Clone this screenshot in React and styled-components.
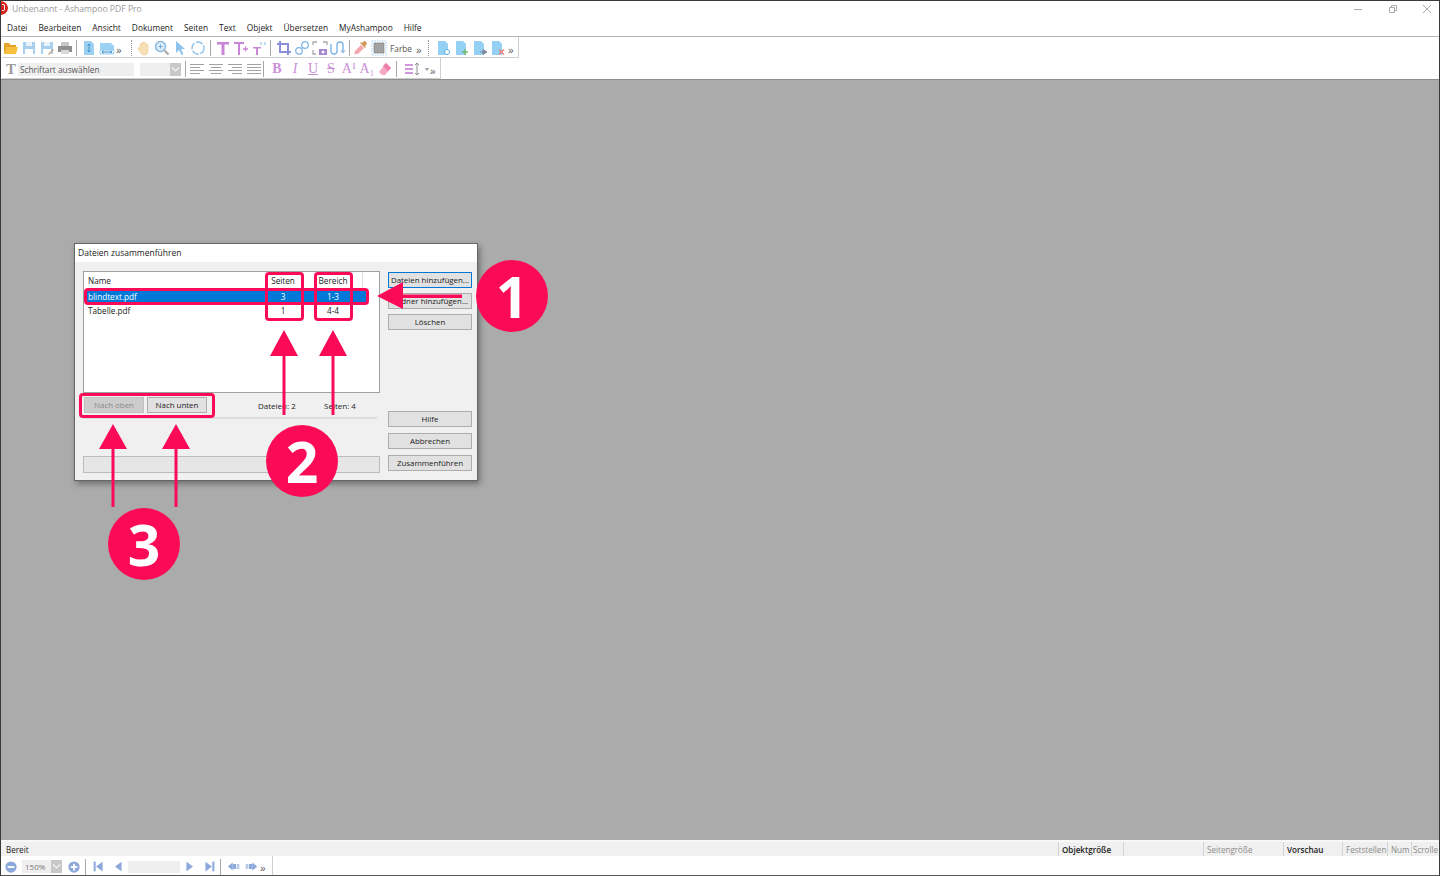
import React from "react";
import styled, { createGlobalStyle } from "styled-components";

const pink = "#fb0a58";

const Global = createGlobalStyle`
  html, body { margin: 0; padding: 0; height: 100%; overflow: hidden; }
  body { font-family: "Open Sans", "Liberation Sans", sans-serif; font-size: 9px; color: #1c1c1c; }
`;

const Win = styled.div`
  position: relative;
  width: 1440px;
  height: 876px;
  box-sizing: border-box;
  border: 1px solid #3a3a3a;
  border-bottom-color: #555;
  display: flex;
  flex-direction: column;
  background: #fff;
  overflow: hidden;
`;

/* ----- title + menu ----- */
const TitleBar = styled.div`
  height: 17px;
  flex: none;
  display: flex;
  align-items: center;
  padding: 0 0 1px 11px;
  box-sizing: border-box;
  color: #9a9a9a;
  font-size: 8.6px;
  position: relative;
`;

const AppLogo = styled.span`
  position: absolute;
  left: -9px;
  top: 0;
  width: 16px;
  height: 14px;
  border-radius: 50%;
  background: #d3201c;
  &::after {
    content: "";
    position: absolute;
    right: 3px;
    top: 3px;
    width: 2px;
    height: 5px;
    border: 1px solid #fff;
    border-left: none;
    border-radius: 0 2px 2px 0;
  }
`;

const WinControls = styled.div`
  margin-left: auto;
  display: flex;
  align-items: center;
`;

const WinBtn = styled.span`
  width: 34.5px;
  height: 16px;
  box-sizing: border-box;
  padding-right: 7px;
  display: flex;
  align-items: center;
  justify-content: flex-end;
`;

const MenuBar = styled.nav`
  height: 19px;
  flex: none;
  display: flex;
  align-items: center;
  padding-left: 6px;
  gap: 11px;
  font-size: 8.35px;
  color: #222;
  border-bottom: 1px solid #b5b5b5;
  box-sizing: border-box;
`;

/* ----- toolbars ----- */
const ToolRow = styled.div`
  height: ${(p) => p.$h || 21}px;
  flex: none;
  display: flex;
  align-items: center;
  background: #fff;
  padding-left: 1px;
  box-sizing: border-box;
`;

const ToolGroup = styled.div`
  display: flex;
  align-items: center;
  height: 100%;
  width: ${(p) => p.$w}px;
  flex: none;
  box-sizing: border-box;
  padding-top: 2px;
  border-right: 1px solid #cfcfcf;
  border-bottom: ${(p) => (p.$flat ? "none" : "1px solid #cfcfcf")};
`;

const Slot = styled.span`
  width: ${(p) => p.$w || 18}px;
  height: 18px;
  flex: none;
  display: flex;
  align-items: center;
  justify-content: center;
  color: ${(p) => p.$c || "#cb8fd8"};
  font-family: "Liberation Serif", serif;
  font-size: ${(p) => p.$size || 13}px;
  font-weight: ${(p) => (p.$bold ? 700 : 400)};
  font-style: ${(p) => (p.$italic ? "italic" : "normal")};
  text-decoration: ${(p) => p.$deco || "none"};
`;

const Sep = styled.span`
  width: 1px;
  height: 16px;
  flex: none;
  background: #a8a8a8;
  margin: 0 ${(p) => p.$r ?? 4}px 0 ${(p) => p.$l ?? 4}px;
`;

const Grip = styled.span`
  width: 1px;
  height: 16px;
  flex: none;
  border-left: 1px dotted #9a9a9a;
  box-sizing: border-box;
  margin: 0 ${(p) => p.$r ?? 4}px 0 ${(p) => p.$l ?? 4}px;
`;

const More = styled.span`
  width: 8px;
  flex: none;
  align-self: flex-end;
  font-family: "Liberation Sans", sans-serif;
  font-size: 10px;
  line-height: 10px;
  color: #555;
  margin-bottom: 1px;
  margin-left: ${(p) => p.$ml || 0}px;
`;

const DropTick = styled.span`
  width: 7px;
  height: 3px;
  flex: none;
  display: flex;
  justify-content: center;
  align-self: center;
  &::before {
    content: "";
    border-left: 2.5px solid transparent;
    border-right: 2.5px solid transparent;
    border-top: 3px solid #999;
  }
`;

const ColorLabel = styled.span`
  width: 26px;
  margin-left: 2px;
  flex: none;
  color: #555;
  font-size: 8.3px;
`;

const FontSelect = styled.div`
  width: 116px;
  height: 13px;
  flex: none;
  margin-left: -2px;
  background: #efefef;
  color: #555;
  font-size: 8.3px;
  line-height: 13px;
  padding-left: 2px;
  box-sizing: border-box;
`;

const Combo = styled.div`
  width: ${(p) => p.$w}px;
  height: 13px;
  flex: none;
  display: flex;
  align-items: center;
  background: #efefef;
  color: #777;
  font-size: 8px;
  padding-left: ${(p) => (p.$text ? 3 : 0)}px;
  box-sizing: border-box;
  margin-left: ${(p) => p.$ml || 0}px;
`;

const ComboArrow = styled.span`
  margin-left: auto;
  width: 11px;
  height: 13px;
  background: #c8c8c8;
  display: flex;
  align-items: center;
  justify-content: center;
`;

const PageField = styled.div`
  width: 52px;
  height: 12px;
  flex: none;
  background: #efefef;
  margin: 0 1px;
`;

/* ----- workspace ----- */
const Workspace = styled.main`
  flex: 1;
  position: relative;
  background: #ababab;
  border-top: 1px solid #8e8e8e;
`;

/* ----- dialog ----- */
const Dialog = styled.section`
  position: absolute;
  left: 73px;
  top: 163px;
  width: 404px;
  height: 238px;
  box-sizing: border-box;
  border: 1px solid #666;
  background: #f0f0f0;
  box-shadow: 2px 3px 6px rgba(0, 0, 0, 0.35);
  display: flex;
  flex-direction: column;
`;

const DialogTitle = styled.div`
  height: 18px;
  flex: none;
  background: #fff;
  font-size: 8.5px;
  line-height: 18px;
  padding-left: 3px;
  color: #222;
`;

const DialogBody = styled.div`
  flex: 1;
  display: flex;
  padding: 9px 6px 7px 8px;
  gap: 8px;
`;

const LeftCol = styled.div`
  width: 297px;
  flex: none;
  display: flex;
  flex-direction: column;
`;

const FileList = styled.div`
  height: 122px;
  flex: none;
  box-sizing: border-box;
  background: #fff;
  border: 1px solid #a0a0a0;
  padding: 0 1px;
`;

const ListRow = styled.div`
  display: grid;
  grid-template-columns: 174px 48px 52px 1fr;
  align-items: center;
  box-sizing: border-box;
  padding-bottom: 1px;
  height: ${(p) => p.$h}px;
  width: ${(p) => p.$w || 282}px;
  font-size: 8.2px;
  background: ${(p) => (p.$active ? "#0078d7" : "transparent")};
  color: ${(p) => (p.$active ? "#fff" : "#222")};
`;

const HeaderRow = styled(ListRow)`
  width: 278px;
  border-right: 1px solid #dcdcdc;
`;

const NameCell = styled.span`
  padding-left: 3px;
`;

const NumCell = styled.span`
  text-align: center;
`;

const ActionRow = styled.div`
  height: 24px;
  flex: none;
  display: flex;
  align-items: center;
  padding-left: 1px;
  gap: 3px;
  font-size: 8px;
`;

const DlgButton = styled.button`
  width: ${(p) => p.$w || 84}px;
  height: 16px;
  flex: none;
  padding: 0 0 1px;
  box-sizing: border-box;
  font-family: inherit;
  font-size: 7.9px;
  color: ${(p) => (p.disabled ? "#8a8a8a" : "#222")};
  background: ${(p) => (p.disabled ? "#cccccc" : "#e1e1e1")};
  border: 1px solid ${(p) => (p.$focus ? "#0078d7" : p.disabled ? "#bfbfbf" : "#adadad")};
  white-space: nowrap;
`;

const Count = styled.span`
  flex: none;
  margin-left: ${(p) => p.$ml}px;
  width: ${(p) => p.$w}px;
`;

const Rule = styled.div`
  width: 294px;
  height: 2px;
  flex: none;
  background: #dcdcdc;
`;

const Progress = styled.div`
  height: 17px;
  width: 297px;
  flex: none;
  box-sizing: border-box;
  margin-top: auto;
  background: #e6e6e6;
  border: 1px solid #bcbcbc;
`;

const RightCol = styled.div`
  width: 84px;
  flex: none;
  display: flex;
  flex-direction: column;
`;

const BtnStack = styled.div`
  display: flex;
  flex-direction: column;
  gap: ${(p) => p.$gap}px;
  margin-top: ${(p) => p.$top || 0}px;
`;

/* ----- status ----- */
const StatusBar = styled.footer`
  height: 16px;
  flex: none;
  display: flex;
  align-items: center;
  background: #f0f0f0;
  font-size: 8.1px;
  color: #222;
  border-top: 2px solid #f8f8f8;
  box-sizing: border-box;
`;

const StatusText = styled.span`
  flex: 1;
  padding: 1px 0 0 5px;
`;

const StatusCell = styled.span`
  width: ${(p) => p.$w}px;
  flex: none;
  box-sizing: border-box;
  height: 100%;
  line-height: 15px;
  padding-left: ${(p) => p.$pad ?? 3}px;
  border-left: 1px solid #d4d4d4;
  white-space: nowrap;
  font-weight: ${(p) => (p.$strong ? 600 : 400)};
  color: ${(p) => (p.$dim ? "#8b8b8b" : "#222")};
`;

/* ----- annotations ----- */
const Mark = styled.div`
  position: absolute;
  left: ${(p) => p.$x}px;
  top: ${(p) => p.$y}px;
  width: ${(p) => p.$w}px;
  height: ${(p) => p.$h}px;
  box-sizing: border-box;
  border: 3px solid ${pink};
  border-radius: 4px;
`;

const Badge = styled.div`
  position: absolute;
  left: ${(p) => p.$x - 36}px;
  top: ${(p) => p.$y - 36}px;
  width: 72px;
  height: 72px;
  border-radius: 50%;
  background: ${pink};
  color: #fff;
  font-family: "Open Sans", sans-serif;
  font-weight: 700;
  font-size: 57px;
  line-height: 72px;
  text-align: center;
`;

const ArrowLayer = styled.svg`
  position: absolute;
  left: -1px;
  top: -1px;
  pointer-events: none;
`;

const Ico = ({ children, size = 16 }) => (
  <svg width={size} height={size} viewBox="0 0 16 16">
    {children}
  </svg>
);

const Folder = () => (
  <Ico>
    <path d="M1 3h5l1.500 2H13v2H4L2 13H1z" fill="#e5a32c" />
    <path d="M3.500 7H15l-2 7H1z" fill="#f6bf3e" />
  </Ico>
);
const Save = ({ pen }) => (
  <Ico>
    <path d="M2 2h12v12H2z" fill="#a9cfee" />
    <path d="M5 2h6v4H5z" fill="#e8f2fb" />
    <path d="M4 9h8v5H4z" fill="#fff" />
    {pen && <path d="M9 14l5-5 1 1-5 5z" fill="#c9a58a" />}
  </Ico>
);
const Printer = () => (
  <Ico>
    <path d="M4 2h8v4H4z" fill="#c8c8c8" />
    <path d="M1 6h14v6H1z" fill="#8f8f8f" />
    <path d="M4 10h8v4H4z" fill="#d8d8d8" />
  </Ico>
);
const PageFit = () => (
  <Ico>
    <path d="M3 1h7l3 3v11H3z" fill="#9dd1f3" />
    <path d="M8 4v8M6.500 5.500L8 4l1.500 1.500M6.500 10.500L8 12l1.500-1.500" stroke="#3d8fcb" fill="none" />
  </Ico>
);
const PageWidth = () => (
  <Ico>
    <path d="M1 3h11l3 3v4H1z" fill="#9dd1f3" />
    <path d="M1 10h14v4H1z" fill="#e6f3fc" stroke="#7cc0ea" strokeWidth=".7" />
    <path d="M3 12h10M4.500 10.700L3 12l1.500 1.300M11.500 10.700L13 12l-1.500 1.300" stroke="#3d8fcb" fill="none" />
  </Ico>
);
const Hand = () => (
  <Ico>
    <path d="M4 8V4.500a1 1 0 012 0V3a1 1 0 012 0v.500a1 1 0 012 0V5a1 1 0 012 0v6c0 3-2 4-4 4s-3-1-4-3L2 9c-.5-1 .8-1.700 1.500-1z" fill="#f8dfb4" stroke="#efcf9c" strokeWidth=".6" />
  </Ico>
);
const Zoom = () => (
  <Ico>
    <circle cx="6.500" cy="6.500" r="5" fill="#d8ecfa" stroke="#8cb9dc" strokeWidth="1.500" />
    <path d="M4.500 6.500h4M6.500 4.500v4" stroke="#7aa9cf" />
    <path d="M10.500 10.500l4 4" stroke="#a9a9a9" strokeWidth="2.200" />
  </Ico>
);
const Pointer = () => (
  <Ico>
    <path d="M4 1l9 8H9l2.500 5-2 1L7 10l-3 3z" fill="#8fc3ec" />
  </Ico>
);
const Rotate = () => (
  <Ico>
    <circle cx="8" cy="8" r="6" fill="none" stroke="#8fc3ec" strokeWidth="1.400" strokeDasharray="7 1.500" />
  </Ico>
);
const TPlus = () => (
  <Ico>
    <path d="M1 2h10v2H7v11H5V4H1z" fill="#c985d8" />
    <path d="M10 9h5M12.500 6.500v5" stroke="#c985d8" strokeWidth="1.300" />
  </Ico>
);
const TLines = () => (
  <Ico>
    <path d="M2 7h8v1.500H7V15H5V8.500H2z" fill="#c985d8" />
    <path d="M10 2v3M14 2v3" stroke="#8fc3ec" strokeWidth="1.200" />
  </Ico>
);
const BigT = () => (
  <Ico>
    <path d="M2 2h12v2.500H9.500V15h-3V4.500H2z" fill="#c985d8" />
  </Ico>
);
const Crop = () => (
  <Ico>
    <path d="M4 1v11h11M1 4h11v11" stroke="#8b8ed8" strokeWidth="2" fill="none" />
  </Ico>
);
const Chain = () => (
  <Ico>
    <circle cx="5" cy="11" r="3.300" fill="none" stroke="#7fb6e6" strokeWidth="1.300" />
    <circle cx="11" cy="5" r="3.300" fill="none" stroke="#7fb6e6" strokeWidth="1.300" />
  </Ico>
);
const Capture = () => (
  <Ico>
    <path d="M1 5V2h4M11 2h4v3M1 10v4h3" stroke="#a9a9a9" strokeWidth="1.300" fill="none" />
    <path d="M7 9h8v6H7z" fill="#a688d0" />
    <circle cx="11" cy="12" r="1.500" fill="#fff" />
  </Ico>
);
const Magnet = () => (
  <Ico>
    <path d="M1 4v7a3 3 0 006 0V5a3 3 0 016 0v7" stroke="#7fb6e6" strokeWidth="1.400" fill="none" />
    <path d="M11 10l2 3 2-3" stroke="#7fb6e6" fill="none" />
  </Ico>
);
const Pipette = () => (
  <Ico>
    <path d="M2 14l-1 1 1-4 6-6 3 3-6 6z" fill="#f4a5b0" />
    <path d="M9 3l2-2c1-.6 3 1.400 3 3l-2 2 1 1-1 1-5-5 1-1z" fill="#d09a5e" />
  </Ico>
);
const Swatch = () => (
  <Ico>
    <path d="M1 1h14v14H1z" fill="#fff" stroke="#8fc3ec" strokeWidth=".8" strokeDasharray="1.500 1" />
    <path d="M3 3h10v10H3z" fill="#a3a3a3" stroke="#777" strokeWidth=".6" />
  </Ico>
);
const Doc = ({ children }) => (
  <Ico>
    <path d="M2 1h7l3 3v11H2z" fill="#95d0f5" />
    {children}
  </Ico>
);
const Align = ({ kind }) => {
  const short = kind === "l" ? 1 : kind === "c" ? 3 : 5;
  const rows = kind === "j"
    ? [[1, 14], [1, 14], [1, 14], [1, 14]]
    : [[1, 14], [short, 10], [1, 14], [short, 10]];
  return (
    <Ico>
      {rows.map(([x, w], i) => (
        <path key={i} d={`M${x} ${3.500 + i * 3}h${w}`} stroke="#a2a2a2" />
      ))}
    </Ico>
  );
};
const Eraser = () => (
  <Ico>
    <path d="M9 2l5 5-6 7H5l-3-3z" fill="#f7a8c4" />
    <path d="M9 2l5 5-3 3-5-5z" fill="#ee7fa8" />
  </Ico>
);
const LineSpace = () => (
  <Ico>
    <path d="M1 4h8M1 8h8M1 12h8" stroke="#c176d2" strokeWidth="1.500" />
    <path d="M13 2v12M11 4l2-2 2 2M11 12l2 2 2-2" stroke="#8f8f8f" fill="none" />
  </Ico>
);
const Chevron = () => (
  <svg width="9" height="7" viewBox="0 0 9 7">
    <path d="M1 1.500l3.500 3.500L8 1.500" stroke="#f4f4f4" strokeWidth="1.200" fill="none" />
  </svg>
);
const Round = ({ plus }) => (
  <Ico size={12}>
    <circle cx="8" cy="8" r="7.500" fill="#8da8da" />
    <path d="M3.500 8h9" stroke="#fff" strokeWidth="2.400" />
    {plus && <path d="M8 3.500v9" stroke="#fff" strokeWidth="2.400" />}
  </Ico>
);
const Nav = ({ dir, bar }) => (
  <Ico size={13}>
    <g transform={dir === "l" ? "" : "matrix(-1 0 0 1 16 0)"} fill="#8da8da">
      {bar && <path d="M2 2h2.500v12H2z" />}
      <path d="M13 2v12L5 8z" />
    </g>
  </Ico>
);
const HistoryArrow = ({ dir }) => (
  <Ico size={13}>
    <g transform={dir === "l" ? "" : "matrix(-1 0 0 1 16 0)"} fill="#8da8da">
      <path d="M1 8l6-5v10z" />
      <path d="M7 5h4v6H7zM12 5h1v6h-1zM14 5h1v6h-1z" />
    </g>
  </Ico>
);

const menu = ["Datei", "Bearbeiten", "Ansicht", "Dokument", "Seiten", "Text", "Objekt", "Übersetzen", "MyAshampoo", "Hilfe"];

const arrows = [
  "M284 330l14 26h-12.500v59h-3v-59H270z",
  "M333 330l14 26h-12.500v59h-3v-59H319z",
  "M113 424l14 25h-12.500v58h-3v-58H99z",
  "M176 424l14 25h-12.500v58h-3v-58H162z",
  "M377 296l26-14v12.500h59v3.500h-59v11z",
];

export default function App() {
  return (
    <Win>
      <Global />
      <TitleBar>
        <AppLogo />
        Unbenannt - Ashampoo PDF Pro
        <WinControls>
          <WinBtn>
            <svg width="10" height="10"><path d="M1 5.500h8" stroke="#aaa" /></svg>
          </WinBtn>
          <WinBtn>
            <svg width="10" height="10"><path d="M1.500 3.500h5v5h-5zM3.500 3V1.500h5v5H7" stroke="#aaa" fill="none" /></svg>
          </WinBtn>
          <WinBtn>
            <svg width="10" height="10"><path d="M1 1l8 8M9 1l-8 8" stroke="#aaa" /></svg>
          </WinBtn>
        </WinControls>
      </TitleBar>
      <MenuBar>
        {menu.map((m) => (
          <span key={m}>{m}</span>
        ))}
      </MenuBar>

      <ToolRow>
        <ToolGroup $w={517}>
          <Slot><Folder /></Slot>
          <Slot><Save /></Slot>
          <Slot><Save pen /></Slot>
          <Slot><Printer /></Slot>
          <Sep $l={2} $r={3} />
          <Slot><PageFit /></Slot>
          <Slot><PageWidth /></Slot>
          <More>»</More>
          <Grip $l={7} $r={3} />
          <Slot><Hand /></Slot>
          <Slot><Zoom /></Slot>
          <Slot><Pointer /></Slot>
          <Slot><Rotate /></Slot>
          <Sep $l={3} $r={3} />
          <Slot><BigT /></Slot>
          <Slot><TPlus /></Slot>
          <Slot><TLines /></Slot>
          <Sep $l={2} $r={4} />
          <Slot><Crop /></Slot>
          <Slot><Chain /></Slot>
          <Slot><Capture /></Slot>
          <Slot><Magnet /></Slot>
          <Sep $l={2} $r={2} />
          <Slot><Pipette /></Slot>
          <Slot><Swatch /></Slot>
          <ColorLabel>Farbe</ColorLabel>
          <More>»</More>
          <Grip $l={4} $r={6} />
          <Slot>
            <Doc><circle cx="11" cy="12" r="2.500" fill="#fff" stroke="#5fb0e6" /></Doc>
          </Slot>
          <Slot>
            <Doc><path d="M8 12h6M11 9v6" stroke="#6dbb6d" strokeWidth="1.500" /></Doc>
          </Slot>
          <Slot>
            <Doc><path d="M8 12h3V9.500l4 2.500-4 2.500V12" fill="#7a8a9a" stroke="#7a8a9a" /></Doc>
          </Slot>
          <Slot>
            <Doc><path d="M9 9.500l5 5M14 9.500l-5 5" stroke="#e88080" strokeWidth="1.500" /></Doc>
          </Slot>
          <More $ml={1}>»</More>
        </ToolGroup>
      </ToolRow>

      <ToolRow>
        <ToolGroup $w={439}>
          <Slot $c="#9a9a9a" $bold $size={15}>T</Slot>
          <FontSelect>Schriftart auswählen</FontSelect>
          <Combo $w={41} $ml={6}>
            <ComboArrow><Chevron /></ComboArrow>
          </Combo>
          <Sep $l={4} $r={2} />
          <Slot><Align kind="l" /></Slot>
          <Slot $w={20}><Align kind="c" /></Slot>
          <Slot><Align kind="r" /></Slot>
          <Slot $w={19}><Align kind="j" /></Slot>
          <Sep $l={0} $r={4} />
          <Slot $bold $size={14}>B</Slot>
          <Slot $italic $size={14}>I</Slot>
          <Slot $deco="underline" $size={14}>U</Slot>
          <Slot $deco="line-through" $size={14}>S</Slot>
          <Slot $size={14}>A¹</Slot>
          <Slot $size={14}>A₁</Slot>
          <Slot><Eraser /></Slot>
          <Sep $l={2} $r={4} />
          <Slot $w={22}><LineSpace /></Slot>
          <DropTick />
          <More>»</More>
        </ToolGroup>
      </ToolRow>

      <Workspace>
        <Dialog>
          <DialogTitle>Dateien zusammenführen</DialogTitle>
          <DialogBody>
            <LeftCol>
              <FileList>
                <HeaderRow $h={18}>
                  <NameCell>Name</NameCell>
                  <NumCell>Seiten</NumCell>
                  <NumCell>Bereich</NumCell>
                </HeaderRow>
                <ListRow $h={14} $active>
                  <NameCell>blindtext.pdf</NameCell>
                  <NumCell>3</NumCell>
                  <NumCell>1-3</NumCell>
                </ListRow>
                <ListRow $h={13}>
                  <NameCell>Tabelle.pdf</NameCell>
                  <NumCell>1</NumCell>
                  <NumCell>4-4</NumCell>
                </ListRow>
              </FileList>
              <ActionRow>
                <DlgButton $w={60} disabled>Nach oben</DlgButton>
                <DlgButton $w={60}>Nach unten</DlgButton>
                <Count $ml={48} $w={63}>Dateien: 2</Count>
                <Count $ml={0} $w={40}>Seiten: 4</Count>
              </ActionRow>
              <Rule />
              <Progress />
            </LeftCol>
            <RightCol>
              <BtnStack $gap={5} $top={1}>
                <DlgButton $focus>Dateien hinzufügen...</DlgButton>
                <DlgButton>Ordner hinzufügen...</DlgButton>
                <DlgButton>Löschen</DlgButton>
              </BtnStack>
              <BtnStack $gap={6} $top={81}>
                <DlgButton>Hilfe</DlgButton>
                <DlgButton>Abbrechen</DlgButton>
                <DlgButton>Zusammenführen</DlgButton>
              </BtnStack>
            </RightCol>
          </DialogBody>
        </Dialog>
      </Workspace>

      <StatusBar>
        <StatusText>Bereit</StatusText>
        <StatusCell $w={65} $strong>Objektgröße</StatusCell>
        <StatusCell $w={80} />
        <StatusCell $w={80} $dim>Seitengröße</StatusCell>
        <StatusCell $w={59} $strong>Vorschau</StatusCell>
        <StatusCell $w={45} $dim>Feststellen</StatusCell>
        <StatusCell $w={24} $dim>Num</StatusCell>
        <StatusCell $w={28} $pad={1} $dim>Scrolle</StatusCell>
      </StatusBar>

      <ToolRow $h={19}>
        <ToolGroup $w={271} $flat>
          <Slot><Round /></Slot>
          <Combo $w={40} $text $ml={2}>
            150%
            <ComboArrow><Chevron /></ComboArrow>
          </Combo>
          <Slot $w={23}><Round plus /></Slot>
          <Sep $l={0} $r={3} />
          <Slot><Nav dir="l" bar /></Slot>
          <Slot $w={20}><Nav dir="l" /></Slot>
          <PageField />
          <Slot><Nav dir="r" /></Slot>
          <Slot $w={20}><Nav dir="r" bar /></Slot>
          <Sep $l={1} $r={3} />
          <Slot><HistoryArrow dir="l" /></Slot>
          <Slot><HistoryArrow dir="r" /></Slot>
          <More>»</More>
        </ToolGroup>
      </ToolRow>

      <Mark $x={83} $y={287} $w={285} $h={17} />
      <Mark $x={264} $y={271} $w={39} $h={49} />
      <Mark $x={313} $y={271} $w={39} $h={49} />
      <Mark $x={78} $y={392} $w={136} $h={25} />
      <ArrowLayer width="1440" height="876" viewBox="0 0 1440 876">
        {arrows.map((d) => (
          <path key={d} d={d} fill={pink} />
        ))}
      </ArrowLayer>
      <Badge $x={511} $y={295}>1</Badge>
      <Badge $x={301} $y={460}>2</Badge>
      <Badge $x={143} $y={543}>3</Badge>
    </Win>
  );
}
